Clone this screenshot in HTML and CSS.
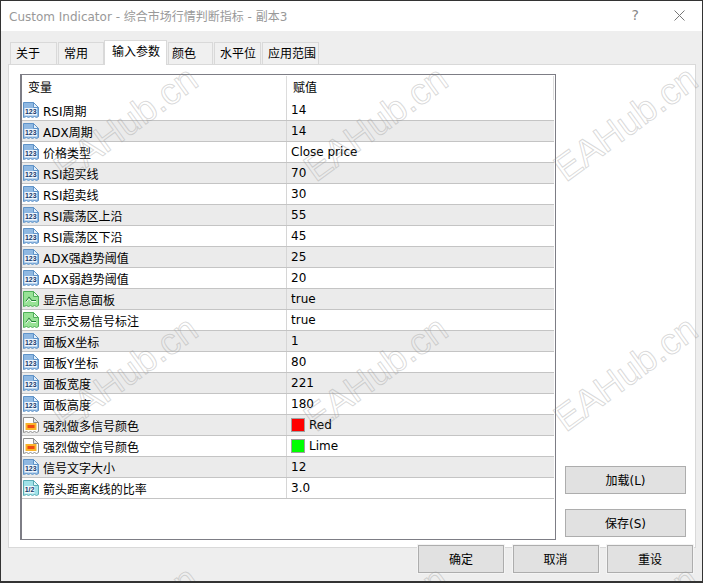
FILE: index.html
```html
<!DOCTYPE html>
<html lang="zh">
<head>
<meta charset="utf-8">
<title>Custom Indicator</title>
<link rel="stylesheet" href="styles.css">
</head>
<body>
<svg class="defs" width="0" height="0" aria-hidden="true">
  <symbol id="page-num" viewBox="0 0 16 16">
    <path d="M.5 .5h10l5 5v9l-2 1-2-1-2 1-2-1-2 1-2-1-3 1z" fill="#8fb8e2" stroke="#5f93c8"/>
    <path d="M10.5 .5v5h5z" fill="#e4f0fb" stroke="#5f93c8"/>
    <rect x="1.5" y="6" width="12.5" height="7.5" fill="#eef5fc"/>
    <text x="7.8" y="12.2" text-anchor="middle" class="icon-text">123</text>
  </symbol>
  <symbol id="page-bool" viewBox="0 0 16 16">
    <path d="M.5 .5h10l5 5v9l-2 1-2-1-2 1-2-1-2 1-2-1-3 1z" fill="#98e296" stroke="#4eae58"/>
    <path d="M10.5 .5v5h5z" fill="#e4f8e2" stroke="#4eae58"/>
    <path d="M3 10.5l3-4 2.5 3H13" fill="none" stroke="#1f7d34" stroke-width="1.2"/>
    <path d="M3 11.5l3-4 2.5 3H13" fill="none" stroke="#f4fff4"/>
  </symbol>
  <symbol id="page-color" viewBox="0 0 16 16">
    <path d="M.5 .5h10l5 5v9l-2 1-2-1-2 1-2-1-2 1-2-1-3 1z" fill="#fdfdfd" stroke="#8e8e8e"/>
    <path d="M10.5 .5v5h5z" fill="#e6e6e6" stroke="#8e8e8e"/>
    <rect x="2.5" y="6" width="11" height="7" fill="#f9b32a"/>
    <rect x="4.5" y="8" width="7" height="3" fill="#ef4a10"/>
  </symbol>
  <symbol id="page-frac" viewBox="0 0 16 16">
    <path d="M.5 .5h10l5 5v9l-2 1-2-1-2 1-2-1-2 1-2-1-3 1z" fill="#a0e2e8" stroke="#58acb4"/>
    <path d="M10.5 .5v5h5z" fill="#e6f8fa" stroke="#58acb4"/>
    <rect x="1.5" y="6" width="10" height="7.5" fill="#eefafb"/>
    <text x="6.5" y="12.2" text-anchor="middle" class="icon-text">1/2</text>
  </symbol>
</svg>
<div class="window">
  <header class="titlebar">
    <span class="title">Custom Indicator - 综合市场行情判断指标 - 副本3</span>
    <span class="help">?</span>
    <svg class="close" width="11" height="11" viewBox="0 0 11 11"><path d="M.5.5l10 10M10.5.5l-10 10" fill="none" stroke="#777"/></svg>
  </header>
  <main class="content">
    <nav class="tabs">
      <span class="tab tab-about">关于</span>
      <span class="tab tab-common">常用</span>
      <span class="tab tab-active">输入参数</span>
      <span class="tab tab-color">颜色</span>
      <span class="tab tab-level">水平位</span>
      <span class="tab tab-range">应用范围</span>
    </nav>
    <section class="panel">
      <div class="list">
        <div class="list-head"><span class="col-name">变量</span><span class="col-value">赋值</span></div>
        <div class="row"><span class="name"><svg class="icon"><use href="#page-num"/></svg>RSI周期</span><span class="value">14</span></div>
        <div class="row"><span class="name"><svg class="icon"><use href="#page-num"/></svg>ADX周期</span><span class="value">14</span></div>
        <div class="row"><span class="name"><svg class="icon"><use href="#page-num"/></svg>价格类型</span><span class="value">Close price</span></div>
        <div class="row"><span class="name"><svg class="icon"><use href="#page-num"/></svg>RSI超买线</span><span class="value">70</span></div>
        <div class="row"><span class="name"><svg class="icon"><use href="#page-num"/></svg>RSI超卖线</span><span class="value">30</span></div>
        <div class="row"><span class="name"><svg class="icon"><use href="#page-num"/></svg>RSI震荡区上沿</span><span class="value">55</span></div>
        <div class="row"><span class="name"><svg class="icon"><use href="#page-num"/></svg>RSI震荡区下沿</span><span class="value">45</span></div>
        <div class="row"><span class="name"><svg class="icon"><use href="#page-num"/></svg>ADX强趋势阈值</span><span class="value">25</span></div>
        <div class="row"><span class="name"><svg class="icon"><use href="#page-num"/></svg>ADX弱趋势阈值</span><span class="value">20</span></div>
        <div class="row"><span class="name"><svg class="icon"><use href="#page-bool"/></svg>显示信息面板</span><span class="value">true</span></div>
        <div class="row"><span class="name"><svg class="icon"><use href="#page-bool"/></svg>显示交易信号标注</span><span class="value">true</span></div>
        <div class="row"><span class="name"><svg class="icon"><use href="#page-num"/></svg>面板X坐标</span><span class="value">1</span></div>
        <div class="row"><span class="name"><svg class="icon"><use href="#page-num"/></svg>面板Y坐标</span><span class="value">80</span></div>
        <div class="row"><span class="name"><svg class="icon"><use href="#page-num"/></svg>面板宽度</span><span class="value">221</span></div>
        <div class="row"><span class="name"><svg class="icon"><use href="#page-num"/></svg>面板高度</span><span class="value">180</span></div>
        <div class="row"><span class="name"><svg class="icon"><use href="#page-color"/></svg>强烈做多信号颜色</span><span class="value"><i class="swatch swatch-red"></i>Red</span></div>
        <div class="row"><span class="name"><svg class="icon"><use href="#page-color"/></svg>强烈做空信号颜色</span><span class="value"><i class="swatch swatch-lime"></i>Lime</span></div>
        <div class="row"><span class="name"><svg class="icon"><use href="#page-num"/></svg>信号文字大小</span><span class="value">12</span></div>
        <div class="row"><span class="name"><svg class="icon"><use href="#page-frac"/></svg>箭头距离K线的比率</span><span class="value">3.0</span></div>
      </div>
      <div class="side">
        <button class="btn btn-side">加载(L)</button>
        <button class="btn btn-side">保存(S)</button>
      </div>
    </section>
    <footer class="footer">
      <button class="btn btn-foot">确定</button>
      <button class="btn btn-foot">取消</button>
      <button class="btn btn-foot">重设</button>
    </footer>
  </main>
  <div class="watermarks" aria-hidden="true">
    <span class="wm">EAHub.cn</span><span class="wm">EAHub.cn</span><span class="wm">EAHub.cn</span>
    <span class="wm">EAHub.cn</span><span class="wm">EAHub.cn</span><span class="wm">EAHub.cn</span>
    <span class="wm">EAHub.cn</span><span class="wm">EAHub.cn</span><span class="wm">EAHub.cn</span>
  </div>
</div>
</body>
</html>
```
FILE: styles.css
```css
* { box-sizing: border-box; }
html, body { margin: 0; padding: 0; }
body {
  width: 703px;
  height: 583px;
  overflow: hidden;
  font-family: "DejaVu Sans", "Noto Sans CJK SC", sans-serif;
  font-size: 12px;
  color: #000;
  background: #eee;
}
.defs { position: absolute; }
.icon-text { font: bold 7px "Liberation Sans", sans-serif; fill: #17396b; }

.window {
  position: relative;
  width: 703px;
  height: 583px;
  border: 1px solid #333;
  border-bottom-width: 2px;
  display: flex;
  flex-direction: column;
  background: #eee;
  overflow: hidden;
}

.titlebar {
  height: 30px;
  flex: none;
  background: #fff;
  display: flex;
  align-items: center;
  padding: 0 17px 0 8px;
  color: #999;
}
.title { flex: 1; font-size: 12px; padding-bottom: 2px; }
.help { font-size: 14px; color: #888; margin-right: 35px; margin-bottom: 2px; }
.close { display: block; margin-bottom: 2px; }

.content { flex: 1; display: flex; flex-direction: column; padding: 10px 6px 0 7px; min-height: 0; }

.tabs { display: flex; height: 23px; align-items: flex-end; flex: none; padding-left: 2px; position: relative; z-index: 1; }
.tab {
  height: 22px;
  border: 1px solid #d9d9d9;
  border-bottom: 0;
  margin-right: 1px;
  background: #f0f0f0;
  display: flex;
  align-items: center;
  white-space: nowrap;
  padding-bottom: 2px;
}
.tab-about { width: 47px; padding-left: 5px; }
.tab-common { width: 46px; margin-right: 0; padding-left: 5px; }
.tab-active {
  width: 63px;
  height: 25px;
  background: #fff;
  margin-bottom: -1px;
  padding-left: 7px;
  padding-bottom: 5px;
}
.tab-color { width: 45px; padding-left: 3px; }
.tab-level { width: 47px; padding-left: 5px; }
.tab-range { width: 57px; padding-left: 5px; margin-right: 0; }

.panel {
  height: 484px;
  flex: none;
  background: #fff;
  border: 1px solid #d9d9d9;
  display: flex;
  padding: 9px 10px 7px 11px;
  gap: 9px;
}
.list {
  width: 536px;
  flex: none;
  border: 1px solid #7d7d85;
  border-width: 1px 1px 1px 2px;
  background: #fff;
}
.list-head { display: flex; height: 25px; padding-top: 1px; }
.col-name { width: 265px; padding-left: 6px; line-height: 24px; border-right: 1px solid #ddd; }
.col-value { flex: 1; padding-left: 6px; line-height: 24px; border-right: 1px solid #ddd; margin-right: 1px; }

.row {
  display: flex;
  height: 21px;
  border-bottom: 1px solid #c4c4c4;
  margin-right: 1px;
}
.row:nth-child(odd) { background: #ebebeb; }
.name { width: 265px; display: flex; align-items: center; border-right: 1px solid #d6d6d6; padding: 0 0 0 1px; white-space: nowrap; }
.icon { width: 16px; height: 16px; margin: 0 4px 0 0; flex: none; }
.value { flex: 1; padding: 0 0 0 4px; display: flex; align-items: center; white-space: nowrap; }
.swatch { width: 14px; height: 14px; border: 1px solid #a0a0a0; margin-right: 4px; flex: none; display: block; }
.swatch-red { background: #f00; }
.swatch-lime { background: #0f0; }

.side { width: 121px; flex: none; display: flex; flex-direction: column; justify-content: flex-end; gap: 15px; padding-bottom: 3px; }
.btn {
  font: inherit;
  color: #000;
  background: #e1e1e1;
  border: 1px solid #adadad;
  height: 28px;
  padding: 0 0 2px;
  display: block;
}
.btn-side { width: 121px; }
.footer {
  display: flex;
  justify-content: flex-end;
  gap: 8.5px;
  margin-top: -3px;
  padding-right: 3px;
  position: relative;
}
.btn-foot { width: 86px; box-shadow: 0 0 0 1px #f4f4f4; }

.watermarks {
  position: absolute;
  inset: -2px 0 0 0;
  overflow: hidden;
  pointer-events: none;
  display: grid;
  grid-template-columns: repeat(3, 250px);
  grid-auto-rows: 250px;
}
.wm {
  display: flex;
  align-items: center;
  justify-content: center;
  font: 37px "Liberation Sans", sans-serif;
  color: transparent;
  -webkit-text-stroke: 1px rgba(150, 150, 150, .36);
  transform: rotate(-36deg);
  white-space: nowrap;
}
```
